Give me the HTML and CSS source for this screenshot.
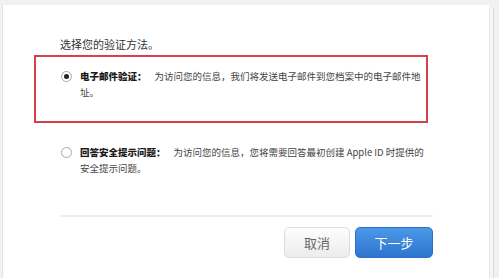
FILE: index.html
```html
<!DOCTYPE html>
<html lang="zh-CN">
<head>
<meta charset="utf-8">
<link rel="stylesheet" href="styles.css">
</head>
<body>
<div class="page">
  <div class="card">
    <p class="title">选择您的验证方法。</p>
    <div class="options">
      <div class="option">
        <span class="radio checked"></span>
        <p class="opt-text"><b class="label">电子邮件验证：</b><span class="desc">为访问您的信息，我们将发送电子邮件到您档案中的电子邮件地址。</span></p>
      </div>
      <div class="option">
        <span class="radio"></span>
        <p class="opt-text"><b class="label">回答安全提示问题：</b><span class="desc">为访问您的信息，您将需要回答最初创建 Apple ID 时提供的安全提示问题。</span></p>
      </div>
    </div>
    <div class="divider"></div>
    <div class="actions">
      <button class="btn btn-cancel">取消</button>
      <button class="btn btn-next">下一步</button>
    </div>
    <div class="highlight"></div>
  </div>
  <div class="edge"></div>
</div>
</body>
</html>
```

FILE: styles.css
```css
* { box-sizing: border-box; }
html, body { margin: 0; padding: 0; }
body {
  background: #f1f1f1;
  font-family: "Noto Sans CJK SC", "Liberation Sans", sans-serif;
  color: #333;
  width: 499px;
  height: 278px;
  overflow: hidden;
}
.page {
  display: flex;
  padding: 5px 0 0 2px;
  height: 278px;
}
.card {
  position: relative;
  width: 487px;
  height: 273px;
  background: #fff;
  border-left: 1px solid #e4e4e4;
  padding: 31px 56px 0 57px;
}
.edge {
  width: 5px;
  margin-top: 3px;
  border-left: 1px solid #e6e6e6;
  border-right: 1px solid #d9d9d9;
  background: #f6f6f6;
}
.title {
  margin: 0;
  font-size: 11px;
  line-height: 16px;
  color: #333;
}
.options {
  display: flex;
  flex-direction: column;
  gap: 44px;
  margin-top: 16px;
}
.option {
  display: flex;
  align-items: flex-start;
  gap: 8px;
  padding-left: 1px;
}
.radio {
  flex: none;
  width: 11px;
  height: 11px;
  margin-top: 3px;
  border: 1px solid #a8a8a8;
  border-radius: 50%;
  background: #fff;
  display: flex;
  align-items: center;
  justify-content: center;
}
.radio.checked::after {
  content: "";
  width: 5px;
  height: 5px;
  border-radius: 50%;
  background: #222;
}
.opt-text {
  margin: 0;
  width: 349px;
  font-size: 9.5px;
  line-height: 16px;
  color: #444;
}
.label {
  font-weight: 900;
  color: #1a1a1a;
  margin-right: 8px;
}
.desc {
  color: #444;
}
.divider {
  margin-top: 39px;
  height: 2px;
  background: #eeeeee;
}
.actions {
  display: flex;
  justify-content: flex-end;
  gap: 5px;
  margin-top: 10px;
}
.btn {
  height: 31px;
  border-radius: 5px;
  font-family: "Noto Sans CJK SC", sans-serif;
  font-size: 13px;
  padding: 0;
}
.btn-cancel {
  width: 66px;
  color: #666;
  background: linear-gradient(#fdfdfd, #ececec);
  border: 1px solid #dcdcdc;
}
.btn-next {
  width: 78px;
  color: #fff;
  background: linear-gradient(#4c98e8, #2d74cf);
  border: 1px solid #2c6fc4;
}
.highlight {
  position: absolute;
  left: 31px;
  top: 50px;
  width: 394px;
  height: 68px;
  border: 2px solid #d6404a;
  pointer-events: none;
}
```
